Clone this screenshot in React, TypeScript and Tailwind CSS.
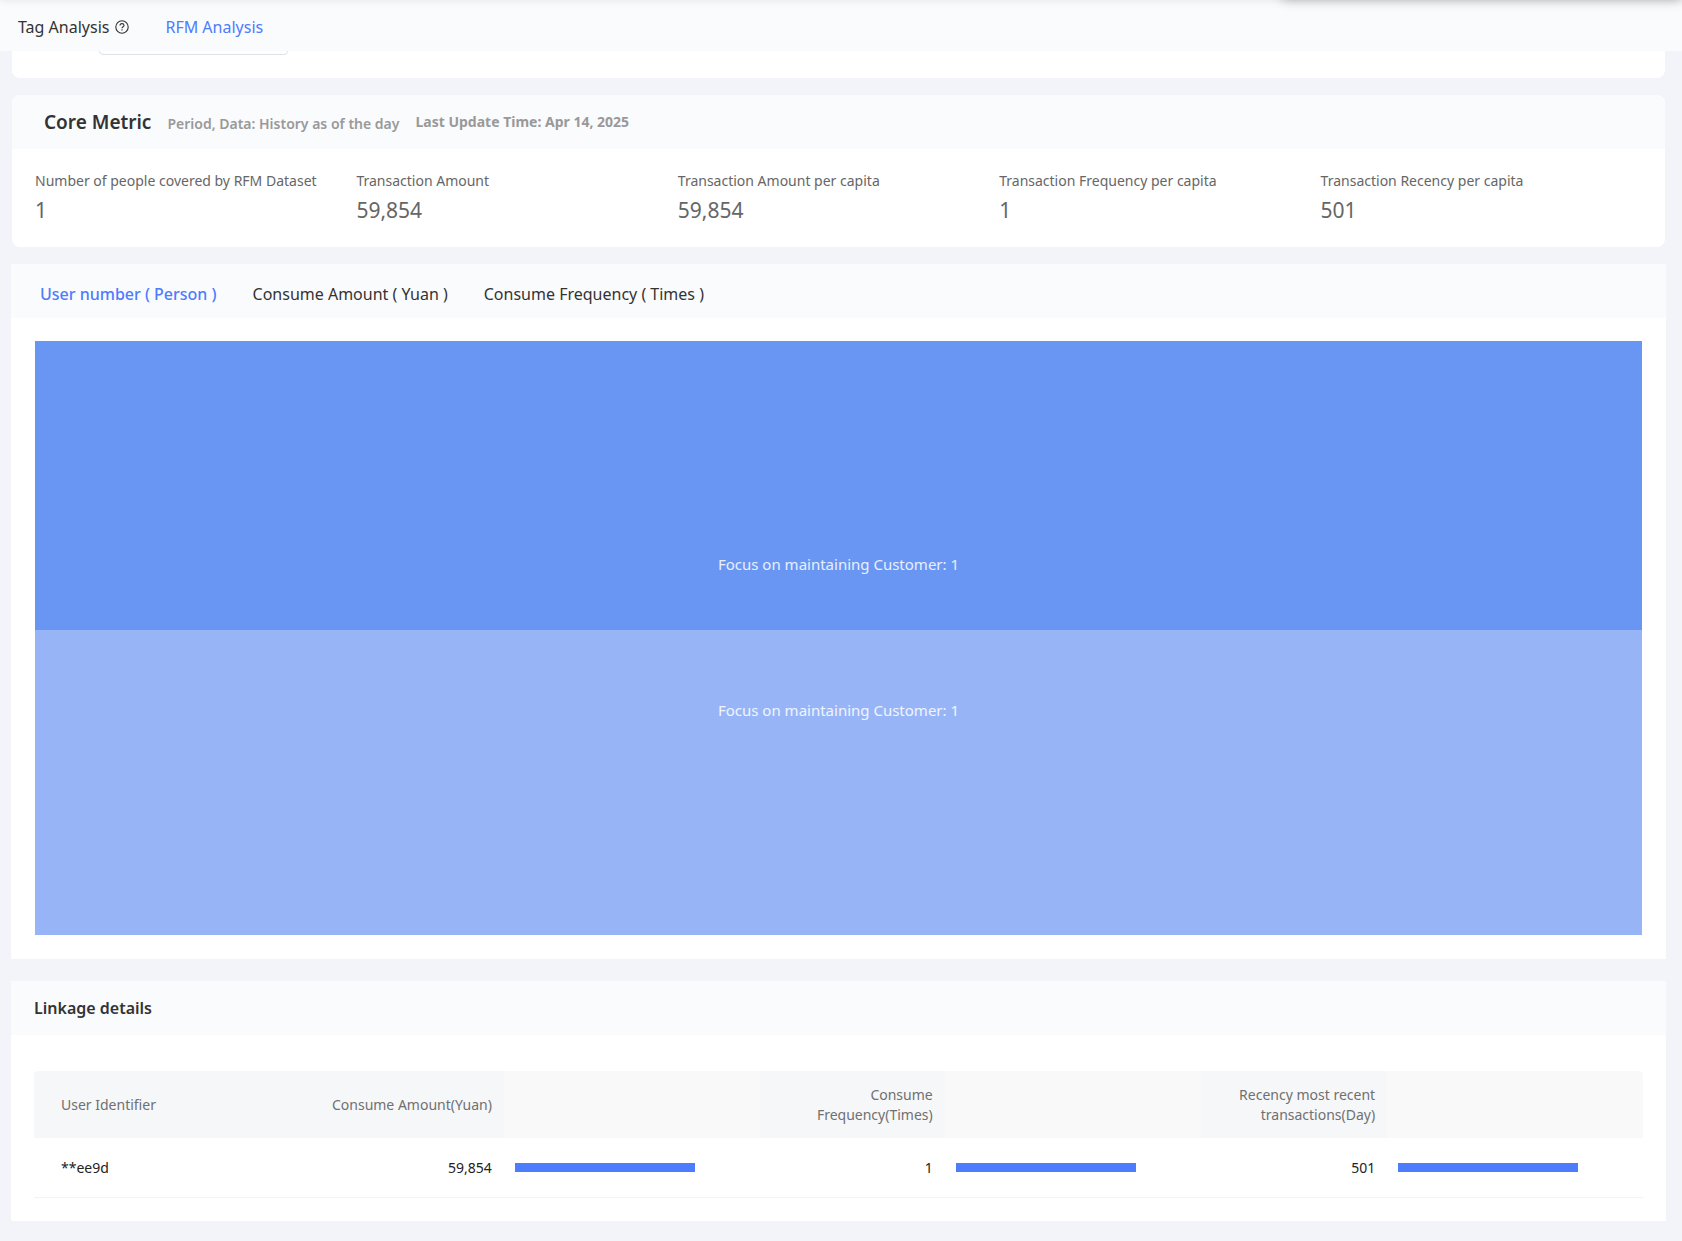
const metrics = [
  { label: 'Number of people covered by RFM Dataset', value: '1' },
  { label: 'Transaction Amount', value: '59,854' },
  { label: 'Transaction Amount per capita', value: '59,854' },
  { label: 'Transaction Frequency per capita', value: '1' },
  { label: 'Transaction Recency per capita', value: '501' },
];

const chartTabs = ['User number ( Person )', 'Consume Amount ( Yuan )', 'Consume Frequency ( Times )'];

const rows = [{ id: '**ee9d', amount: '59,854', frequency: '1', recency: '501' }];

function HelpIcon() {
  return (
    <svg viewBox="0 0 14 14" className="size-3.5" fill="none" stroke="currentColor" strokeWidth="1.1" aria-hidden="true">
      <circle cx="7" cy="7" r="6.2" />
      <path d="M5 5.6C5 4.3 5.8 3.6 7 3.6s2 .7 2 1.8c0 1.4-2 1.4-2 2.9" />
      <path d="M7 9.3v1.3" />
    </svg>
  );
}

function TopBar() {
  return (
    <header className="relative z-10 h-[51px] overflow-hidden bg-[#fafbfd]">
      <div className="absolute -top-2 left-0 h-2 w-full shadow-[0_0_8px_rgba(0,0,0,0.10)]" />
      <div className="absolute -top-4 right-0 h-4 w-[400px] rounded shadow-[0_0_12px_rgba(0,0,0,0.26)]" />
      <nav className="flex h-full items-center gap-9 px-[18px] pt-0.5 text-base">
        <button type="button" className="flex items-center gap-1.5 text-[#333]">
          Tag Analysis
          <HelpIcon />
        </button>
        <button type="button" className="text-[#4d7cfe]">
          RFM Analysis
        </button>
      </nav>
    </header>
  );
}

function FilterCard() {
  return (
    <section className="mx-px h-[27px] overflow-hidden rounded-b-lg bg-white">
      <input
        aria-label="Filter"
        className="-mt-7 ml-[87px] block h-8 w-[189px] rounded border border-[#dfe1e6] bg-white px-3"
      />
    </section>
  );
}

function CoreMetric() {
  return (
    <section className="mx-px mt-[17px] overflow-hidden rounded-lg bg-white">
      <div className="flex h-[54px] items-center gap-4 bg-[#fafbfd] pl-8">
        <h2 className="text-[19px] font-semibold text-[#333]">Core Metric</h2>
        <span className="pt-1 text-sm font-semibold text-[#999]">Period, Data: History as of the day</span>
        <span className="text-sm font-bold text-[#999]">Last Update Time: Apr 14, 2025</span>
      </div>
      <dl className="grid grid-cols-5 px-[23px] pt-5 pb-5 text-[#666]">
        {metrics.map((m) => (
          <div key={m.label}>
            <dt className="text-sm leading-6">{m.label}</dt>
            <dd className="text-[21px] leading-[34px]">{m.value}</dd>
          </div>
        ))}
      </dl>
    </section>
  );
}

function ChartCard() {
  return (
    <section className="mt-[17px] bg-white">
      <div className="flex h-[54px] items-center gap-9 bg-[#fafbfd] px-[29px] pt-1.5 text-base">
        {chartTabs.map((tab, i) => (
          <button
            key={tab}
            type="button"
            className={i === 0 ? 'font-medium text-[#4d7cfe]' : 'text-[#333]'}
          >
            {tab}
          </button>
        ))}
      </div>
      <div className="px-6 pt-[23px] pb-6 text-[15px] leading-6 text-white/85">
        <div className="flex h-[289px] items-end justify-center bg-[#6996f2] pb-[54px]">
          Focus on maintaining Customer: 1
        </div>
        <div className="flex h-[305px] items-start justify-center bg-[#97b5f6] pt-[68px]">
          Focus on maintaining Customer: 1
        </div>
      </div>
    </section>
  );
}

function BarCell() {
  return (
    <td className="border-b border-[#f2f3f5] pl-[11px]">
      <div className="h-[9px] w-[180px] bg-[#4d7cfe]" />
    </td>
  );
}

function Details() {
  const th = 'bg-[#f6f7f9] pr-3 text-right font-normal';
  const gap = 'bg-[#f9f9f9]';
  const td = 'border-b border-[#f2f3f5] pr-3 text-right';
  return (
    <section className="mt-[22px] bg-white">
      <h2 className="flex h-[54px] items-center bg-[#fafbfd] px-[23px] text-base font-semibold text-[#333]">
        Linkage details
      </h2>
      <div className="px-[23px] pt-9 pb-[23px]">
        <div className="overflow-hidden rounded-t">
          <table className="w-full table-fixed border-separate border-spacing-0 text-sm leading-5">
            <colgroup>
              <col />
              <col className="w-[11.5%]" />
              <col className="w-[15.9%]" />
              <col className="w-[11.5%]" />
              <col className="w-[15.9%]" />
              <col className="w-[11.6%]" />
              <col className="w-[15.9%]" />
            </colgroup>
            <thead className="text-[#707070]">
              <tr className="h-[67px]">
                <th scope="col" className="bg-[#f6f7f9] pl-[27px] text-left font-normal">User Identifier</th>
                <th scope="col" className={th}>Consume Amount(Yuan)</th>
                <td className={gap} />
                <th scope="col" className={th}>Consume Frequency(Times)</th>
                <td className={gap} />
                <th scope="col" className={th}>Recency most recent transactions(Day)</th>
                <td className={gap} />
              </tr>
            </thead>
            <tbody className="text-[#222]">
              {rows.map((r) => (
                <tr key={r.id} className="h-[60px]">
                  <td className="border-b border-[#f2f3f5] pl-[27px]">{r.id}</td>
                  <td className={td}>{r.amount}</td>
                  <BarCell />
                  <td className={td}>{r.frequency}</td>
                  <BarCell />
                  <td className={td}>{r.recency}</td>
                  <BarCell />
                </tr>
              ))}
            </tbody>
          </table>
        </div>
      </div>
    </section>
  );
}

export default function App() {
  return (
    <div className="min-h-screen bg-[#f3f4f9] font-['Noto_Sans',sans-serif]">
      <TopBar />
      <main className="pr-4 pb-5 pl-[11px]">
        <FilterCard />
        <CoreMetric />
        <ChartCard />
        <Details />
      </main>
    </div>
  );
}
